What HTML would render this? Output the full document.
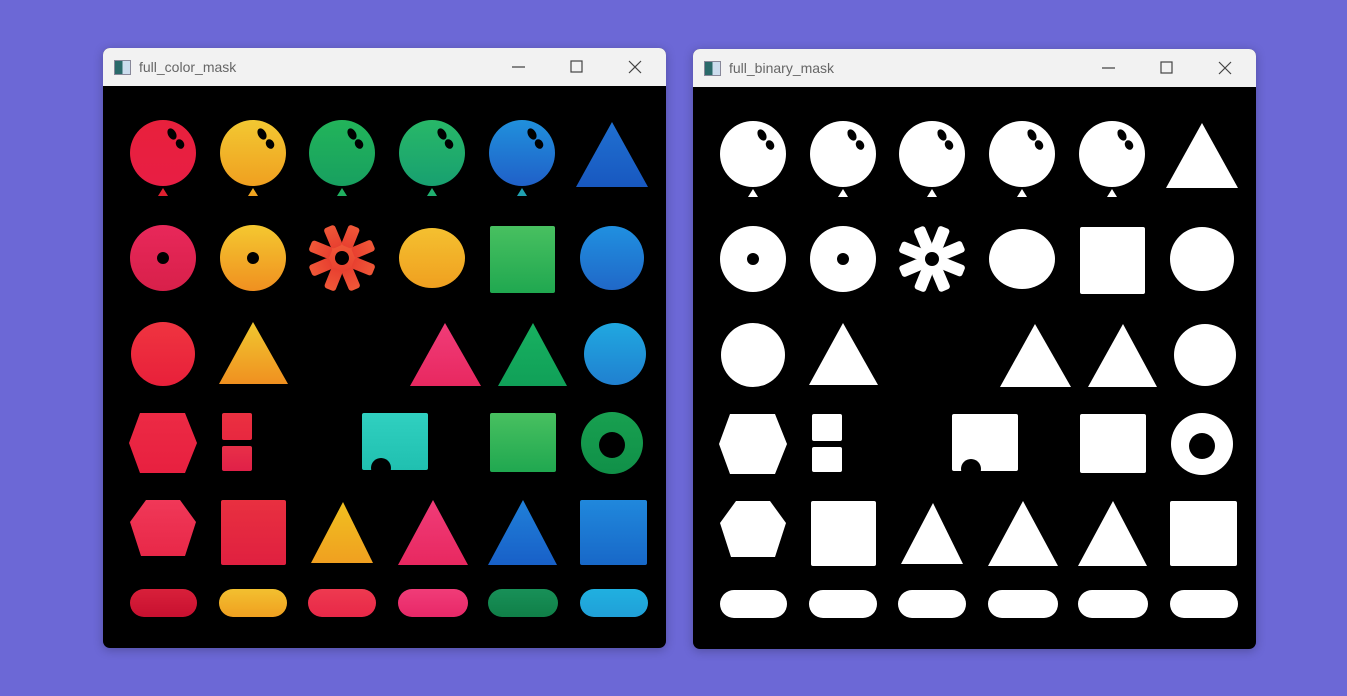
<!DOCTYPE html>
<html><head><meta charset="utf-8"><style>
body{margin:0;width:1347px;height:696px;background:#6c68d6;overflow:hidden;font-family:"Liberation Sans",sans-serif}
.win{position:absolute;width:563px;height:600px;background:#000;border-radius:7px;overflow:hidden;box-shadow:0 2px 10px rgba(0,0,0,.25)}
.tb{height:38px;background:#f2f2f2;position:relative;color:#666;font-size:14px}
.tb .t{position:absolute;left:36px;top:11px}
.ic{position:absolute;left:11px;top:12px;width:15px;height:13px;border:1px solid #889;background:linear-gradient(90deg,#2a6a6a 50%,#cde 50%)}
svg{position:absolute;left:0;top:38px}
</style></head><body>
<div class="win" style="left:103px;top:48px"><div class="tb"><div class="ic"></div><span class="t">full_color_mask</span>
<svg style="position:absolute;left:405px;top:12px" width="140" height="14"><path d="M4 7h13" stroke="#444" stroke-width="1.2"/><rect x="63" y="1" width="11" height="11" fill="none" stroke="#444" stroke-width="1.2"/><path d="M121 1l12 12M133 1l-12 12" stroke="#444" stroke-width="1.2"/></svg></div><svg id="a" width="563" height="562"></svg></div>
<div class="win" style="left:693px;top:49px"><div class="tb"><div class="ic"></div><span class="t">full_binary_mask</span>
<svg style="position:absolute;left:405px;top:12px" width="140" height="14"><path d="M4 7h13" stroke="#444" stroke-width="1.2"/><rect x="63" y="1" width="11" height="11" fill="none" stroke="#444" stroke-width="1.2"/><path d="M121 1l12 12M133 1l-12 12" stroke="#444" stroke-width="1.2"/></svg></div><svg id="b" width="563" height="562"></svg></div>
<script>
const S=[
['c',163,153,33,'#e8203c','#e81e44'],['c',253,153,33,'#f2c832','#f0a020'],['c',342,153,33,'#22b45a','#18a060'],['c',432,153,33,'#28b868','#18a070'],['c',522,153,33,'#2090dc','#2060c8'],
['p','612,122 576,187 648,187','#2070d0','#1858c0'],
['p','163,188 158,196 168,196','#e02030','#e02030'],['p','253,188 248,196 258,196','#f0b020','#f0a020'],['p','342,188 337,196 347,196','#20b060','#20b060'],['p','432,188 427,196 437,196','#20b070','#20b070'],['p','522,188 517,196 527,196','#20a0b0','#20a0b0'],
['c',163,258,33,'#e8285a','#d8204a'],['c',253,258,33,'#f4c830','#f09020'],['f',342,258,'#f05838','#e84030'],['e',432,258,33,30,'#f4c030','#f0a020'],['r',490,226,65,67,'#48c060','#20a850'],['c',612,258,32,'#2090e0','#2068c8'],
['c',163,354,32,'#ef3440','#e8203a'],['p','253,322 219,384 288,384','#f0c830','#f09020'],['p','445,323 410,386 481,386','#f03c78','#e82860'],['p','533,323 498,386 567,386','#18b060','#10a058'],['c',615,354,31,'#20a8e0','#2080d0'],
['p','140,413 185,413 197,443 185,473 140,473 129,443','#ec2a44','#e82040'],['r',222,413,30,27,'#ea3040','#e82840'],['r',222,446,30,25,'#e83048','#e02048'],['r',362,413,66,57,'#30d0c0','#20c0b0'],['r',490,413,66,59,'#48c060','#20a850'],['c',612,443,31,'#18a050','#109048'],
['p','146,500 180,500 196,522 185,556 141,556 130,522','#f03858','#e82848'],['r',221,500,65,65,'#e83040','#e02040'],['p','343,502 311,563 373,563','#f0c020','#f0a020'],['p','433,500 398,565 468,565','#f03c78','#e82860'],['p','523,500 488,565 557,565','#2080d8','#1860c8'],['r',580,500,67,65,'#2088dc','#1868c8'],
['r',130,589,67,28,'#d8203a','#c81030',14],['r',219,589,68,28,'#f2c030','#f0a020',14],['r',308,589,68,28,'#ee3a50','#e82848',14],['r',398,589,70,28,'#f03c78','#e82868',14],['r',488,589,70,28,'#189058','#108048',14],['r',580,589,68,28,'#20b0e0','#20a0d8',14]
];
const holes=[['e',172,134,4,6],['e',180,144,4,5],['e',262,134,4,6],['e',270,144,4,5],['e',352,134,4,6],['e',359,144,4,5],['e',442,134,4,6],['e',449,144,4,5],['e',532,134,4,6],['e',539,144,4,5],['c',163,258,6],['c',253,258,6],['c',342,258,7],['c',381,468,10],['c',612,445,13]];
function build(id,bin){let o='<defs>',b='';
S.forEach((s,i)=>{let c1,c2;if(s[0]=='r'){c1=s[5];c2=s[6]}else if(s[0]=='c'){c1=s[4];c2=s[5]}else if(s[0]=='e'){c1=s[5];c2=s[6]}else if(s[0]=='p'){c1=s[2];c2=s[3]}else{c1=s[3];c2=s[4]}
o+=`<linearGradient id="${id}g${i}" x1="0" y1="0" x2="0" y2="1"><stop offset="0" stop-color="${c1}"/><stop offset="1" stop-color="${c2}"/></linearGradient>`;
const f=bin?'#fff':`url(#${id}g${i})`;
if(s[0]=='c')b+=`<circle cx="${s[1]-103}" cy="${s[2]-86}" r="${s[3]}" fill="${f}"/>`;
else if(s[0]=='e')b+=`<ellipse cx="${s[1]-103}" cy="${s[2]-86}" rx="${s[3]}" ry="${s[4]}" fill="${f}"/>`;
else if(s[0]=='r')b+=`<rect x="${s[1]-103}" y="${s[2]-86}" width="${s[3]}" height="${s[4]}" rx="${s[7]||2}" fill="${f}"/>`;
else if(s[0]=='p')b+=`<polygon points="${s[1].split(' ').map(q=>{const [x,y]=q.split(',');return (x-103)+','+(y-86)}).join(' ')}" fill="${f}"/>`;
else{const cx=s[1]-103,cy=s[2]-86;b+=`<g transform="translate(${cx},${cy})" fill="${f}"><circle r="15"/>`;for(let k=0;k<8;k++)b+=`<rect x="-6" y="-34" width="12" height="22" rx="3" transform="rotate(${k*45+22})"/>`;b+='</g>'}});
holes.forEach(h=>{if(h[0]=='c')b+=`<circle cx="${h[1]-103}" cy="${h[2]-86}" r="${h[3]}" fill="#000"/>`;else b+=`<ellipse cx="${h[1]-103}" cy="${h[2]-86}" rx="${h[3]}" ry="${h[4]}" transform="rotate(-30 ${h[1]-103} ${h[2]-86})" fill="#000"/>`;});
document.getElementById(id).innerHTML=o+'</defs>'+b;}
build('a',0);build('b',1);
</script>
</body></html>
